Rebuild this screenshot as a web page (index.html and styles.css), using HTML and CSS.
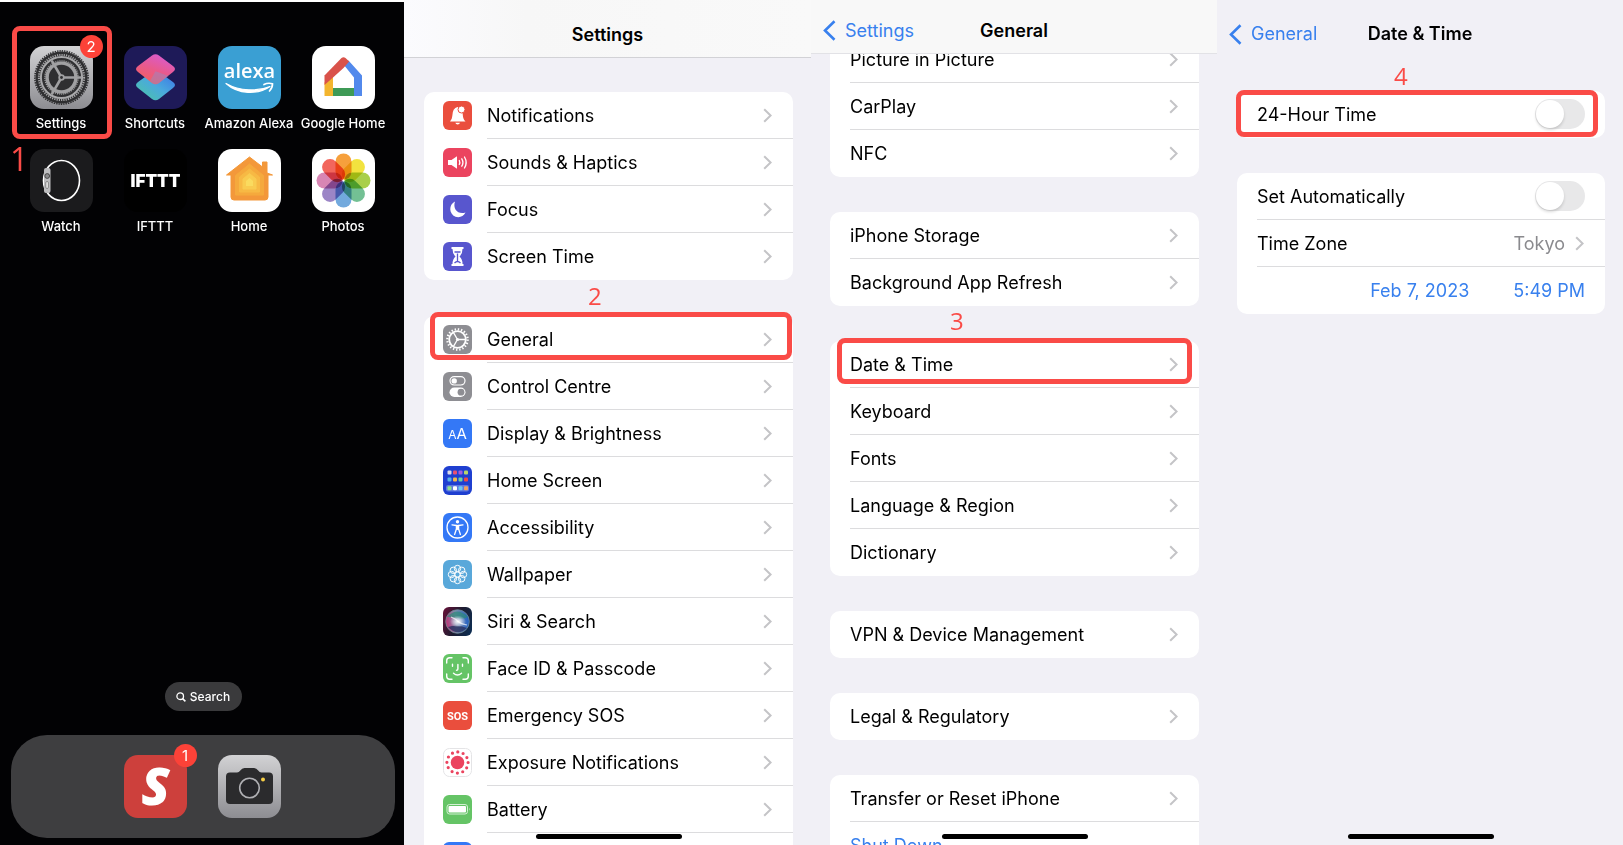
FILE: index.html
```html
<!DOCTYPE html>
<html lang="en">
<head>
  <meta charset="UTF-8" />
  <meta name="viewport" content="width=device-width, initial-scale=1.0" />
  <title>Switch iPhone to 24-Hour Time</title>
  <link rel="stylesheet" href="styles.css">
</head>
<body>
  <!-- Shared shapes -->
  <svg class="sprite" aria-hidden="true">
    <symbol id="chevron" viewBox="0 0 9 15">
      <path d="M1.2 1.2 L7.6 7.5 L1.2 13.8" fill="none" stroke="currentColor" stroke-width="2" />
    </symbol>
    <symbol id="back" viewBox="0 0 13 21">
      <path d="M11.5 1.2 L2 10.5 L11.5 19.8" fill="none" stroke="currentColor" stroke-width="2.6" />
    </symbol>
  </svg>

  <main class="steps">
    <!-- Step 1: home screen -->
    <section class="phone home-screen">
      <div class="apps">
        <a class="app" href="#settings">
          <span class="app-icon">
            <svg viewBox="0 0 63 63">
              <defs>
                <linearGradient id="metal" x1="0" y1="0" x2="0" y2="1">
                  <stop offset="0" stop-color="#d2d2d4" /><stop offset="1" stop-color="#8d8d92" />
                </linearGradient>
              </defs>
              <rect width="63" height="63" rx="14" fill="url(#metal)" />
              <circle cx="31.5" cy="31.5" r="26" fill="#2f2f31" />
              <circle cx="31.5" cy="31.5" r="26.6" fill="none" stroke="#2f2f31" stroke-width="1.6" stroke-dasharray="1.4 1" />
              <circle cx="31.5" cy="31.5" r="22.6" fill="none" stroke="#a9a9ab" stroke-width="2" stroke-dasharray="1.2 1.1" />
              <circle cx="31.5" cy="31.5" r="20.6" fill="none" stroke="#a9a9ab" stroke-width="2" />
              <circle cx="31.5" cy="31.5" r="14.4" fill="none" stroke="#a0a0a2" stroke-width="3.4" />
              <circle cx="31.5" cy="31.5" r="16.6" fill="none" stroke="#a0a0a2" stroke-width="1.4" stroke-dasharray="1.1 1" />
              <path d="M31.5 31.5 H51 M31.5 31.5 L21.7 14.6 M31.5 31.5 L21.7 48.4" stroke="#a0a0a2" stroke-width="2.6" />
              <circle cx="31.5" cy="31.5" r="3.2" fill="#a0a0a2" />
              <circle cx="31.5" cy="31.5" r="1.4" fill="#2f2f31" />
            </svg>
            <span class="badge">2</span>
          </span>
          <span class="app-name">Settings</span>
          <span class="callout callout-app"></span>
          <span class="step-number step-one">1</span>
        </a>
        <a class="app" href="#shortcuts">
          <span class="app-icon">
            <svg viewBox="0 0 63 63">
              <defs>
                <linearGradient id="pink" x1="0.2" y1="1" x2="0.7" y2="0">
                  <stop offset="0" stop-color="#f4605a" /><stop offset="0.5" stop-color="#e95a8c" /><stop offset="1" stop-color="#d95bd0" />
                </linearGradient>
                <linearGradient id="aqua" x1="0" y1="1" x2="1" y2="0">
                  <stop offset="0" stop-color="#4cc9a0" /><stop offset="0.5" stop-color="#4aa9dd" /><stop offset="1" stop-color="#3a6fe8" />
                </linearGradient>
              </defs>
              <rect width="63" height="63" rx="14" fill="#1e1a58" />
              <path d="M28 26 Q31.500 23.500 35 26 L49 36 Q53 39 49 42 L35 53 Q31.500 55.500 28 53 L14 42 Q10 39 14 36 Z" fill="url(#aqua)" />
              <path d="M28 9.500 Q31.500 7 35 9.500 L49 20 Q53 23 49 26 L35 37 Q31.500 39.500 28 37 L14 26 Q10 23 14 20 Z" fill="url(#pink)" />
              <path d="M31.500 25.300 L44.500 30 L35 37 Q31.500 39.500 28 37 L26 35 Z" fill="#8f8fc8" opacity="0.45" />
            </svg>
          </span>
          <span class="app-name">Shortcuts</span>
        </a>
        <a class="app" href="#alexa">
          <span class="app-icon">
            <svg viewBox="0 0 63 63">
              <rect width="63" height="63" rx="14" fill="#3a9fd3" />
              <text x="31.5" y="32" class="logo-alexa">alexa</text>
              <path d="M8 37.500 C20 48.500 40 49 52 40.500 C40 45.500 22 45.500 8 37.500 Z" fill="#fff" stroke="#fff" stroke-width="1.200" stroke-linejoin="round" />
              <path d="M46 38.500 C49 37 52 37 54.500 37.800 C54.500 40.500 53.500 43 51.500 45" fill="none" stroke="#fff" stroke-width="1.700" stroke-linecap="round" />
            </svg>
          </span>
          <span class="app-name">Amazon Alexa</span>
        </a>
        <a class="app" href="#google-home">
          <span class="app-icon">
            <svg viewBox="0 0 63 63">
              <rect width="63" height="63" rx="14" fill="#fff" />
              <path d="M12.500 36.500 L21 29 V50 H12.500 Z" fill="#f3b52e" />
              <path d="M21 42 H42 V50 H21 Z" fill="#3e9a56" />
              <path d="M31.500 18.500 L36.500 14.500 L50 29.500 V50 H42 V31.500 Z" fill="#5289ec" />
              <path d="M12.500 39 V29.500 L29.500 12 Q31.500 10.500 33.500 12 L37.200 15.500 L31.500 22 L21 31.500 Z" fill="#d9524a" />
            </svg>
          </span>
          <span class="app-name">Google Home</span>
        </a>
        <a class="app" href="#watch">
          <span class="app-icon">
            <svg viewBox="0 0 63 63">
              <rect width="63" height="63" rx="14" fill="#1b1b1d" />
              <ellipse cx="31.5" cy="31.5" rx="18" ry="20" fill="none" stroke="#fff" stroke-width="1.6" />
              <rect x="14" y="19" width="6.500" height="25" rx="2" fill="#bdbdbf" />
              <circle cx="17.2" cy="27" r="2.400" fill="#8b8b8d" stroke="#333" stroke-width="0.800" />
              <rect x="15.800" y="32.500" width="2.600" height="7" rx="1.300" fill="#e8e8e8" stroke="#555" stroke-width="0.600" />
            </svg>
          </span>
          <span class="app-name">Watch</span>
        </a>
        <a class="app" href="#ifttt">
          <span class="app-icon">
            <svg viewBox="0 0 63 63">
              <rect width="63" height="63" rx="14" fill="#000" />
              <text x="31.5" y="38" class="logo-ifttt">IFTTT</text>
            </svg>
          </span>
          <span class="app-name">IFTTT</span>
        </a>
        <a class="app" href="#home">
          <span class="app-icon">
            <svg viewBox="0 0 63 63">
              <rect width="63" height="63" rx="14" fill="#fff" />
              <path d="M44.500 13 H49 V24 L54.500 26 H50 V48 Q50 51 47 51 H16 Q13 51 13 48 V26 H8.500 L31.500 8 L44.500 18 Z" fill="#f3983a" stroke="#f3983a" stroke-width="1" stroke-linejoin="round" />
              <path d="M31.500 15 L45.500 26.500 V46 H17.500 V26.500 Z" fill="#f5a93d" stroke="#f5a93d" stroke-linejoin="round" />
              <path d="M31.500 20 L41.500 28 V43 H21.500 V28 Z" fill="#f7b944" stroke="#f7b944" stroke-linejoin="round" />
              <path d="M31.500 24.500 L38 30 V40 H25 V30 Z" fill="#f9cb50" stroke="#f9cb50" stroke-linejoin="round" />
              <path d="M31.500 29 L35 32 V37 H28 V32 Z" fill="#fadb5f" />
            </svg>
          </span>
          <span class="app-name">Home</span>
        </a>
        <a class="app" href="#photos">
          <span class="app-icon">
            <svg viewBox="0 0 63 63">
              <rect width="63" height="63" rx="14" fill="#fff" />
              <g class="petals">
                <rect x="23.500" y="4.500" width="16" height="26" rx="8" fill="#f6a03c" />
                <rect x="23.500" y="4.500" width="16" height="26" rx="8" fill="#f2e33f" transform="rotate(45 31.5 31.5)" />
                <rect x="23.500" y="4.500" width="16" height="26" rx="8" fill="#a9cf4a" transform="rotate(90 31.5 31.5)" />
                <rect x="23.500" y="4.500" width="16" height="26" rx="8" fill="#73c094" transform="rotate(135 31.5 31.5)" />
                <rect x="23.500" y="4.500" width="16" height="26" rx="8" fill="#72a9dd" transform="rotate(180 31.5 31.5)" />
                <rect x="23.500" y="4.500" width="16" height="26" rx="8" fill="#9b85c6" transform="rotate(225 31.5 31.5)" />
                <rect x="23.500" y="4.500" width="16" height="26" rx="8" fill="#d886b4" transform="rotate(270 31.5 31.5)" />
                <rect x="23.500" y="4.500" width="16" height="26" rx="8" fill="#f2665c" transform="rotate(315 31.5 31.5)" />
              </g>
            </svg>
          </span>
          <span class="app-name">Photos</span>
        </a>
      </div>

      <button class="search" type="button">
        <svg viewBox="0 0 10 10" width="10" height="10"><circle cx="4.200" cy="4.200" r="3.300" fill="none" stroke="#fff" stroke-width="1.300" /><path d="M6.600 6.600 L9.400 9.400" stroke="#fff" stroke-width="1.500" /></svg>
        Search
      </button>

      <div class="dock">
        <a class="app-icon" href="#s-app" aria-label="S">
          <svg viewBox="0 0 63 63">
            <rect width="63" height="63" rx="14" fill="#cd403c" />
            <text x="31.5" y="50" class="logo-s">S</text>
          </svg>
          <span class="badge">1</span>
        </a>
        <a class="app-icon" href="#camera" aria-label="Camera">
          <svg viewBox="0 0 63 63">
            <rect width="63" height="63" rx="14" fill="url(#metal)" />
            <path d="M12 17.500 H19 Q21 17.500 22.300 15.500 Q24 13 26.500 13 H36 Q38.500 13 40.200 15.500 Q41.500 17.500 43.500 17.500 H51 Q55 17.500 55 21.500 V45 Q55 49 51 49 H12 Q8 49 8 45 V21.500 Q8 17.500 12 17.500 Z" fill="#2b2b2d" />
            <circle cx="31.5" cy="33" r="9.800" fill="#26262a" stroke="#b0b0b4" stroke-width="1.600" />
            <circle cx="45" cy="24.500" r="2" fill="#f7cf46" />
          </svg>
        </a>
      </div>
    </section>

    <!-- Step 2: Settings -->
    <section class="phone">
      <header class="navbar navbar-root">
        <h2>Settings</h2>
      </header>
      <div class="lists lists-root">
        <div class="list">
          <a class="row" href="#notifications">
            <svg class="row-icon" viewBox="0 0 29 29"><rect width="29" height="29" rx="6" fill="#ea4e3d" /><path d="M7 20.500 Q9 18.800 9.300 15 Q9.500 7 14.500 6 Q19 6.500 19.700 13 Q20 18.500 22.500 20.500 Z M12.300 21.800 H17 Q16.500 23.600 14.700 23.600 Q12.800 23.600 12.300 21.800 Z" fill="#fff" /><circle cx="18.500" cy="8.500" r="3.500" fill="#fff" stroke="#ea4e3d" stroke-width="1" /></svg>
            <span class="row-body">Notifications <svg class="chevron"><use href="#chevron" /></svg></span>
          </a>
          <a class="row" href="#sounds">
            <svg class="row-icon" viewBox="0 0 29 29"><rect width="29" height="29" rx="6" fill="#eb445f" /><path d="M5 12 H8.500 L14 8.300 V20.700 L8.500 17 H5 Z" fill="#fff" /><path d="M16.300 12.500 Q17.300 14.500 16.300 16.500 M18.800 10.800 Q21 14.500 18.800 18.200 M21.500 9 Q24.800 14.500 21.500 20" fill="none" stroke="#fff" stroke-width="1.300" stroke-linecap="round" /></svg>
            <span class="row-body">Sounds &amp; Haptics <svg class="chevron"><use href="#chevron" /></svg></span>
          </a>
          <a class="row" href="#focus">
            <svg class="row-icon" viewBox="0 0 29 29"><rect width="29" height="29" rx="6" fill="#5856ce" /><path d="M12 6.500 C5.500 9.500 5.800 19 12.500 21.700 C16.500 23 20.500 21.500 22.500 17.500 C15 20 9.500 14 12 6.500 Z" fill="#fff" /></svg>
            <span class="row-body">Focus <svg class="chevron"><use href="#chevron" /></svg></span>
          </a>
          <a class="row" href="#screen-time">
            <svg class="row-icon" viewBox="0 0 29 29"><rect width="29" height="29" rx="6" fill="#5856ce" /><path d="M8.500 5 H20.500 V7 H19.500 Q19.500 12 16.500 14.500 Q19.500 17 19.500 22 H20.500 V24 H8.500 V22 H9.500 Q9.500 17 12.500 14.500 Q9.500 12 9.500 7 H8.500 Z" fill="#fff" /><path d="M11.500 10 H17.500 M14.500 11.500 V20 M11.500 21 Q14.500 18 17.500 21" fill="none" stroke="#5856ce" stroke-width="1.300" /></svg>
            <span class="row-body">Screen Time <svg class="chevron"><use href="#chevron" /></svg></span>
          </a>
        </div>

        <div class="list">
          <a class="row" href="#general">
            <svg class="row-icon" viewBox="0 0 29 29"><rect width="29" height="29" rx="6" fill="#8e8e93" /><circle cx="14.500" cy="14.500" r="8.300" fill="none" stroke="#fff" stroke-width="1.800" /><circle cx="14.500" cy="14.500" r="10.200" fill="none" stroke="#fff" stroke-width="2.200" stroke-dasharray="1.400 1.804" /><path d="M14.500 14.500 H22.500 M14.500 14.500 L10.500 7.600 M14.500 14.500 L10.500 21.400" stroke="#fff" stroke-width="1.300" /><circle cx="14.500" cy="14.500" r="1.600" fill="#fff" /></svg>
            <span class="row-body">General <svg class="chevron"><use href="#chevron" /></svg></span>
            <span class="callout callout-general"></span>
            <span class="step-number step-two">2</span>
          </a>
          <a class="row" href="#control-centre">
            <svg class="row-icon" viewBox="0 0 29 29"><rect width="29" height="29" rx="6" fill="#8e8e93" /><rect x="7" y="4.700" width="15" height="8.300" rx="4.150" fill="none" stroke="#fff" stroke-width="1.200" /><circle cx="11.200" cy="8.900" r="2.700" fill="#fff" /><rect x="6.500" y="15.500" width="16" height="9.500" rx="4.750" fill="#fff" /><circle cx="18" cy="20.200" r="3.400" fill="#8e8e93" /></svg>
            <span class="row-body">Control Centre <svg class="chevron"><use href="#chevron" /></svg></span>
          </a>
          <a class="row" href="#display">
            <svg class="row-icon" viewBox="0 0 29 29"><rect width="29" height="29" rx="6" fill="#3478f6" /><text x="14.500" y="20" class="glyph-aa"><tspan class="glyph-a-small">A</tspan>A</text></svg>
            <span class="row-body">Display &amp; Brightness <svg class="chevron"><use href="#chevron" /></svg></span>
          </a>
          <a class="row" href="#home-screen">
            <svg class="row-icon" viewBox="0 0 29 29">
              <rect width="29" height="29" rx="6" fill="#1f3fd0" />
              <rect x="3" y="19" width="23" height="6.500" rx="2" fill="#5d78e0" />
              <g fill="#d9d9e8"><rect x="4.500" y="4.500" width="4" height="4" rx="1" /><rect x="10" y="4.500" width="4" height="4" rx="1" fill="#ea5070" /><rect x="15.500" y="4.500" width="4" height="4" rx="1" fill="#a35be0" /><rect x="21" y="4.500" width="4" height="4" rx="1" fill="#b8d56a" />
              <rect x="4.500" y="11.500" width="4" height="4" rx="1" fill="#57b0e8" /><rect x="10" y="11.500" width="4" height="4" rx="1" fill="#f3b94d" /><rect x="15.500" y="11.500" width="4" height="4" rx="1" fill="#6fd0a0" /><rect x="21" y="11.500" width="4" height="4" rx="1" fill="#e84a4a" />
              <rect x="4.500" y="20.300" width="4" height="4" rx="1" fill="#8fe08a" /><rect x="10" y="20.300" width="4" height="4" rx="1" fill="#fff" /><rect x="15.500" y="20.300" width="4" height="4" rx="1" fill="#6cc8f0" /><rect x="21" y="20.300" width="4" height="4" rx="1" fill="#f0a060" /></g>
            </svg>
            <span class="row-body">Home Screen <svg class="chevron"><use href="#chevron" /></svg></span>
          </a>
          <a class="row" href="#accessibility">
            <svg class="row-icon" viewBox="0 0 29 29"><rect width="29" height="29" rx="6" fill="#3478f6" /><circle cx="14.500" cy="14.500" r="10.500" fill="none" stroke="#fff" stroke-width="1.300" /><circle cx="14.500" cy="8.700" r="1.700" fill="#fff" /><path d="M9 11.800 L13.400 12.500 V16 L11.600 21.500 M20 11.800 L15.600 12.500 V16 L17.400 21.500" fill="none" stroke="#fff" stroke-width="1.300" stroke-linecap="round" stroke-linejoin="round" /><rect x="13" y="11.900" width="3" height="5" fill="#fff" /></svg>
            <span class="row-body">Accessibility <svg class="chevron"><use href="#chevron" /></svg></span>
          </a>
          <a class="row" href="#wallpaper">
            <svg class="row-icon" viewBox="0 0 29 29">
              <rect width="29" height="29" rx="6" fill="#59a8da" />
              <g fill="none" stroke="#fff" stroke-width="1"><circle cx="14.500" cy="14.500" r="2.600" /><circle cx="14.500" cy="8.500" r="3.200" /><circle cx="18.700" cy="10.300" r="3.200" /><circle cx="20.500" cy="14.500" r="3.200" /><circle cx="18.700" cy="18.700" r="3.200" /><circle cx="14.500" cy="20.500" r="3.200" /><circle cx="10.300" cy="18.700" r="3.200" /><circle cx="8.500" cy="14.500" r="3.200" /><circle cx="10.300" cy="10.300" r="3.200" /></g>
            </svg>
            <span class="row-body">Wallpaper <svg class="chevron"><use href="#chevron" /></svg></span>
          </a>
          <a class="row" href="#siri">
            <svg class="row-icon" viewBox="0 0 29 29">
              <defs>
                <linearGradient id="siri-bg" x1="0" y1="0.300" x2="1" y2="0.700"><stop offset="0" stop-color="#5c1236" /><stop offset="0.500" stop-color="#1d1c30" /><stop offset="1" stop-color="#0e2c50" /></linearGradient>
                <linearGradient id="siri-orb" x1="0" y1="0.600" x2="1" y2="0.500"><stop offset="0" stop-color="#c22f74" /><stop offset="0.450" stop-color="#7f8fb0" /><stop offset="1" stop-color="#1e5fc4" /></linearGradient>
                <radialGradient id="siri-glow"><stop offset="0" stop-color="#fff" /><stop offset="1" stop-color="#fff" stop-opacity="0" /></radialGradient>
              </defs>
              <rect width="29" height="29" rx="6" fill="url(#siri-bg)" />
              <circle cx="14.500" cy="14.500" r="11.800" fill="url(#siri-orb)" stroke="#6d8a94" stroke-width="0.800" />
              <path d="M4 10 Q14 -1 25 10 Q20 13 14.500 11 Q9 10 4 10 Z" fill="#2b8a78" opacity="0.700" />
              <path d="M5 20 Q14 17 24 21 Q14.500 30 5 20 Z" fill="#27305f" opacity="0.800" />
              <ellipse cx="15" cy="14.500" rx="8" ry="6" fill="url(#siri-glow)" />
              <path d="M8 10 Q13 12 15 14.500 Q18 17 24 18" fill="none" stroke="#fff" stroke-width="1.200" opacity="0.700" />
            </svg>
            <span class="row-body">Siri &amp; Search <svg class="chevron"><use href="#chevron" /></svg></span>
          </a>
          <a class="row" href="#face-id">
            <svg class="row-icon" viewBox="0 0 29 29"><rect width="29" height="29" rx="6" fill="#65c466" /><path d="M3.700 9 V6.700 Q3.700 3.700 6.700 3.700 H9 M20 3.700 H22.300 Q25.300 3.700 25.300 6.700 V9 M25.300 20 V22.300 Q25.300 25.300 22.300 25.300 H20 M9 25.300 H6.700 Q3.700 25.300 3.700 22.300 V20 M9.500 10.300 V12.300 M19.500 10.300 V12.300 M14.900 10.500 V15 Q14.900 16.200 13.500 16.200 M10.500 19.300 Q14.500 22.800 18.500 19.300" fill="none" stroke="#fff" stroke-width="1.400" stroke-linecap="round" /></svg>
            <span class="row-body">Face ID &amp; Passcode <svg class="chevron"><use href="#chevron" /></svg></span>
          </a>
          <a class="row" href="#sos">
            <svg class="row-icon" viewBox="0 0 29 29"><rect width="29" height="29" rx="6" fill="#ea4e3d" /><text x="14.500" y="19" class="glyph-sos">SOS</text></svg>
            <span class="row-body">Emergency SOS <svg class="chevron"><use href="#chevron" /></svg></span>
          </a>
          <a class="row" href="#exposure">
            <svg class="row-icon" viewBox="0 0 29 29"><rect x="0.500" y="0.500" width="28" height="28" rx="6" fill="#fff" stroke="#e4e4e6" /><circle cx="14.500" cy="14.500" r="6.800" fill="#eb445f" /><circle cx="14.500" cy="14.500" r="10.600" fill="none" stroke="#eb445f" stroke-width="3.200" stroke-linecap="round" stroke-dasharray="0 5.550" /></svg>
            <span class="row-body">Exposure Notifications <svg class="chevron"><use href="#chevron" /></svg></span>
          </a>
          <a class="row" href="#battery">
            <svg class="row-icon" viewBox="0 0 29 29"><rect width="29" height="29" rx="6" fill="#65c466" /><rect x="4" y="9.500" width="20.500" height="9.500" rx="2.500" fill="none" stroke="#d5f0d5" stroke-width="1" /><rect x="5.500" y="11" width="17.500" height="6.500" rx="1" fill="#fff" /><path d="M26 12.800 Q27.300 14.300 26 15.800 Z" fill="#d5f0d5" /></svg>
            <span class="row-body">Battery <svg class="chevron"><use href="#chevron" /></svg></span>
          </a>
          <a class="row" href="#privacy" aria-label="Privacy">
            <svg class="row-icon" viewBox="0 0 29 29"><rect width="29" height="29" rx="6" fill="#3478f6" /></svg>
            <span class="row-body"></span>
          </a>
        </div>
      </div>
      <div class="home-bar"></div>
    </section>

    <!-- Step 3: General -->
    <section class="phone">
      <header class="navbar navbar-general">
        <a class="back" href="#settings"><svg><use href="#back" /></svg>Settings</a>
        <h2>General</h2>
      </header>
      <div class="lists lists-general">
        <div class="list">
          <a class="row" href="#pip"><span class="row-body">Picture in Picture <svg class="chevron"><use href="#chevron" /></svg></span></a>
          <a class="row" href="#carplay"><span class="row-body">CarPlay <svg class="chevron"><use href="#chevron" /></svg></span></a>
          <a class="row" href="#nfc"><span class="row-body">NFC <svg class="chevron"><use href="#chevron" /></svg></span></a>
        </div>
        <div class="list">
          <a class="row" href="#storage"><span class="row-body">iPhone Storage <svg class="chevron"><use href="#chevron" /></svg></span></a>
          <a class="row" href="#refresh"><span class="row-body">Background App Refresh <svg class="chevron"><use href="#chevron" /></svg></span></a>
        </div>
        <div class="list">
          <a class="row" href="#date-time">
            <span class="row-body">Date &amp; Time <svg class="chevron"><use href="#chevron" /></svg></span>
            <span class="callout callout-date"></span>
            <span class="step-number step-three">3</span>
          </a>
          <a class="row" href="#keyboard"><span class="row-body">Keyboard <svg class="chevron"><use href="#chevron" /></svg></span></a>
          <a class="row" href="#fonts"><span class="row-body">Fonts <svg class="chevron"><use href="#chevron" /></svg></span></a>
          <a class="row" href="#language"><span class="row-body">Language &amp; Region <svg class="chevron"><use href="#chevron" /></svg></span></a>
          <a class="row" href="#dictionary"><span class="row-body">Dictionary <svg class="chevron"><use href="#chevron" /></svg></span></a>
        </div>
        <div class="list">
          <a class="row" href="#vpn"><span class="row-body">VPN &amp; Device Management <svg class="chevron"><use href="#chevron" /></svg></span></a>
        </div>
        <div class="list">
          <a class="row" href="#legal"><span class="row-body">Legal &amp; Regulatory <svg class="chevron"><use href="#chevron" /></svg></span></a>
        </div>
        <div class="list">
          <a class="row" href="#reset"><span class="row-body">Transfer or Reset iPhone <svg class="chevron"><use href="#chevron" /></svg></span></a>
          <a class="row row-action" href="#shut-down"><span class="row-body">Shut Down</span></a>
        </div>
      </div>
      <div class="home-bar"></div>
    </section>

    <!-- Step 4: Date & Time -->
    <section class="phone">
      <header class="navbar navbar-date">
        <a class="back" href="#general"><svg><use href="#back" /></svg>General</a>
        <h2>Date &amp; Time</h2>
      </header>
      <div class="lists lists-date">
        <div class="list">
          <div class="row">
            <div class="row-body">
              <label for="hour24">24-Hour Time</label>
              <input class="switch" type="checkbox" role="switch" id="hour24">
            </div>
            <span class="callout callout-switch"></span>
            <span class="step-number step-four">4</span>
          </div>
        </div>
        <div class="list">
          <div class="row">
            <div class="row-body">
              <label for="auto">Set Automatically</label>
              <input class="switch" type="checkbox" role="switch" id="auto">
            </div>
          </div>
          <a class="row" href="#time-zone">
            <span class="row-body">Time Zone <span class="row-value">Tokyo</span><svg class="chevron"><use href="#chevron" /></svg></span>
          </a>
          <div class="row">
            <div class="row-body pickers">
              <button class="picker" type="button">Feb 7, 2023</button>
              <button class="picker" type="button">5:49 PM</button>
            </div>
          </div>
        </div>
      </div>
      <div class="home-bar"></div>
    </section>
  </main>
</body>
</html>
```

FILE: styles.css
```css
* { margin: 0; padding: 0; box-sizing: border-box; }
body {
  font-family: Inter, Roboto, "Liberation Sans", sans-serif;
  font-size: 18px;
  color: #000;
  background: #fff;
}
a { color: inherit; text-decoration: none; }
button { font: inherit; border: none; background: none; cursor: pointer; }
.sprite { display: none; }

.steps {
  display: grid;
  grid-template-columns: 404fr 407fr 406fr 406fr;
  height: 100vh;
}
.phone {
  position: relative;
  display: flex;
  flex-direction: column;
  min-width: 0;
  overflow: hidden;
  background: #f1f0f6;
}

/* Home screen */
.home-screen {
  margin-top: 2px;
  padding: 44px 9px 7px 11px;
  background: #020204;
  color: #fff;
}
.apps {
  display: grid;
  grid-template-columns: repeat(4, 1fr);
  row-gap: 17px;
  padding: 0 5px 0 3px;
}
.app {
  position: relative;
  display: flex;
  flex-direction: column;
  align-items: center;
  gap: 5px;
}
.app-icon {
  position: relative;
  width: 63px;
  height: 63px;
}
.app-icon svg { display: block; width: 100%; height: 100%; }
.app-name {
  font-size: 13px;
  font-weight: 500;
  line-height: 18px;
  white-space: nowrap;
}
.badge {
  position: absolute;
  top: -11px;
  right: -10px;
  width: 23px;
  height: 23px;
  border-radius: 50%;
  background: #fc4238;
  font-size: 15px;
  line-height: 23px;
  text-align: center;
}
.logo-alexa { font: 600 20px "Open Sans", sans-serif; fill: #fff; text-anchor: middle; }
.logo-ifttt { font: 900 17px Inter, sans-serif; fill: #fff; text-anchor: middle; }
.logo-s { font: italic 800 52px "Open Sans", sans-serif; fill: #fff; text-anchor: middle; }
.petals rect { mix-blend-mode: multiply; }

.search {
  display: flex;
  align-items: center;
  justify-content: center;
  gap: 4px;
  width: 77px;
  height: 29px;
  margin: auto auto 24px;
  border-radius: 15px;
  background: #3a3a3c;
  color: #fff;
  font-size: 12px;
  font-weight: 500;
}
.dock {
  display: flex;
  justify-content: center;
  gap: 31px;
  padding: 20px 21px 20px 19px;
  border-radius: 36px;
  background: #3e3e40;
}

/* Navigation bars */
.navbar {
  position: relative;
  z-index: 1;
  flex: none;
  display: flex;
  align-items: center;
  justify-content: center;
}
.navbar h2 { font-size: 18px; font-weight: 600; line-height: 22px; }
.navbar-root {
  height: 58px;
  padding-top: 13px;
  border-bottom: 1px solid #d2d2d6;
  background: linear-gradient(90deg, #fbfbfe, #f7f7f7 30%, #f9f9f9);
}
.navbar-general {
  height: 54px;
  padding-top: 8px;
  border-bottom: 1px solid #e2e2e6;
  background: #f8f8f8;
}
.navbar-date { height: 54px; padding-top: 14px; }
.back {
  position: absolute;
  left: 12px;
  display: flex;
  align-items: center;
  gap: 9px;
  line-height: 22px;
  color: #3880ee;
}
.back svg { width: 13px; height: 21px; }

/* Grouped lists */
.lists {
  display: flex;
  flex-direction: column;
  gap: 35px;
  padding: 0 18px 0 20px;
}
.lists-root { gap: 36px; padding-top: 34px; }
.lists-general { margin-top: -18px; padding-left: 19px; }
.lists-date { padding-top: 37px; }
.list { border-radius: 10px; background: #fff; }
.row {
  position: relative;
  display: flex;
  align-items: center;
  height: 47px;
  padding-left: 20px;
}
.row-icon {
  flex: none;
  width: 29px;
  height: 29px;
  margin: 0 15px 0 -1px;
}
.row-body {
  flex: 1;
  align-self: stretch;
  display: flex;
  align-items: center;
  justify-content: space-between;
  padding-right: 20px;
  border-bottom: 1px solid #dcdcde;
  white-space: nowrap;
}
.row:last-child .row-body { border-bottom-color: transparent; }
.row-action { color: #3880ee; }
.row-value { margin-left: auto; padding-right: 10px; color: #8a8a8e; }
.chevron { flex: none; width: 9px; height: 15px; margin-right: 1px; color: #c4c4c7; }
.pickers { justify-content: flex-end; gap: 44px; }
.picker { color: #3880ee; }

.glyph-aa { font: 400 15px Inter, sans-serif; fill: #fff; text-anchor: middle; }
.glyph-a-small { font-size: 12px; }
.glyph-sos { font: 700 11px Roboto, sans-serif; fill: #fff; text-anchor: middle; }

.switch {
  appearance: none;
  display: flex;
  width: 50px;
  height: 30px;
  padding: 1px;
  border-radius: 15px;
  background: #e8e8e9;
  cursor: pointer;
}
.switch::before {
  content: "";
  width: 28px;
  height: 28px;
  border-radius: 50%;
  background: #fff;
  box-shadow: 0 2px 3px rgba(0, 0, 0, 0.15);
}
.switch:checked { justify-content: flex-end; background: #65c466; }

.home-bar {
  position: absolute;
  left: 50%;
  bottom: 6px;
  width: 146px;
  height: 5px;
  margin-left: -72px;
  border-radius: 3px;
  background: #000;
}

/* Red step markers, laid over the screens */
.callout {
  position: absolute;
  border: 5px solid #fa4b47;
  border-radius: 8px;
  pointer-events: none;
}
.callout-app { top: -20px; bottom: -7px; left: -2px; right: -4px; }
.callout-general { top: -4px; bottom: 3px; left: 6px; right: 1px; }
.callout-date { top: -3px; bottom: 4px; left: 7px; right: 7px; }
.callout-switch { top: -1px; bottom: 1px; left: -1px; right: 7px; }
.step-number {
  position: absolute;
  font-family: "Open Sans", "Noto Sans", sans-serif;
  font-size: 24px;
  line-height: 24px;
  color: #fa4b47;
}
.step-one { top: 97px; left: -4px; font-size: 32px; line-height: 32px; }
.step-two { top: -32px; left: 164px; }
.step-three { top: -32px; left: 120px; }
.step-four { top: -27px; left: 157px; }
```
